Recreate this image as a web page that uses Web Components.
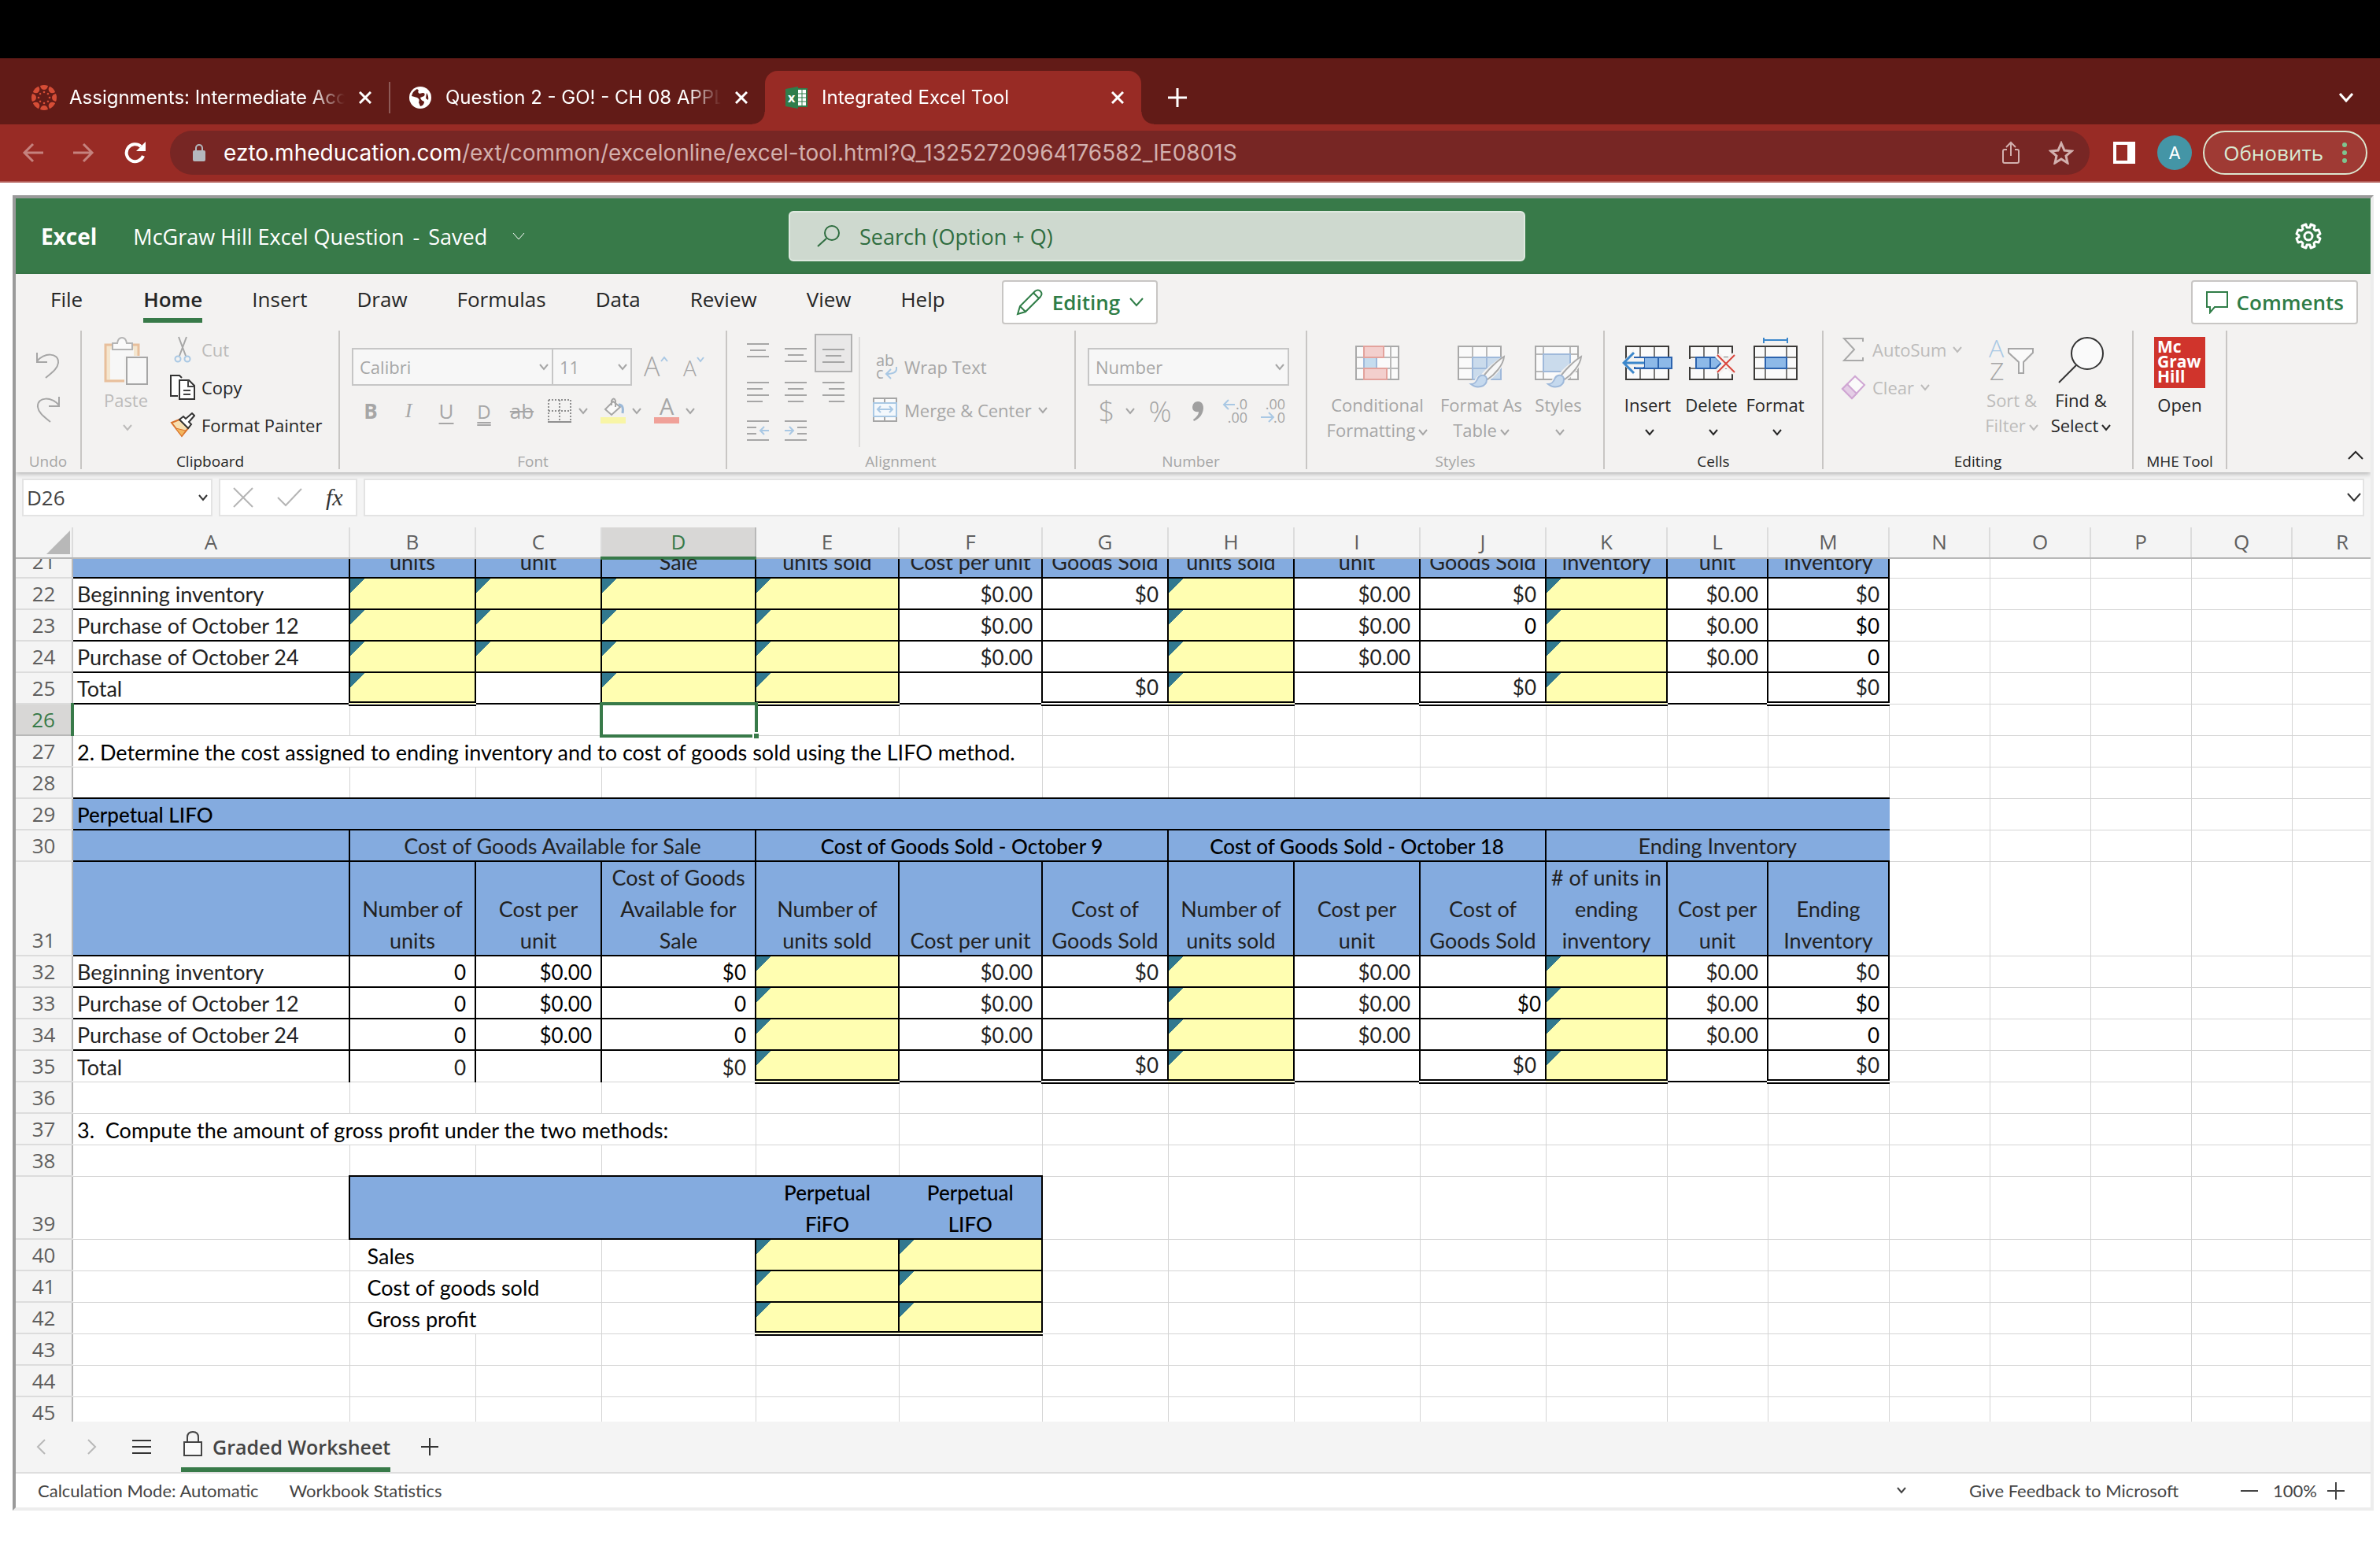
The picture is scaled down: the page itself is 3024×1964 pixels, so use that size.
<!DOCTYPE html>
<html lang="en">
<head>
<meta charset="utf-8">
<title>Integrated Excel Tool</title>
<style>
  html, body { margin: 0; height: 100%; }
  body {
    background: #fff;
    font-family: "Open Sans", "Noto Sans", sans-serif;
    font-size: 22px;
    color: #262626;
  }
</style>
</head>
<body>
<excel-page></excel-page>

<script>
const chevron = (w, h, s = 2) =>
  [w, h, `<path d="M1 1L${w / 2} ${h - 2}L${w - 1} 1" fill="none" stroke="currentColor" stroke-width="${s}"/>`];

// four text lines, each [start, end], drawn on a 28px wide box
const lines = (rows, step = 8) =>
  [28, 28, rows.map(([a, b], i) => `<path d="M${a} ${2 + i * step}H${b}" stroke="currentColor" stroke-width="2"/>`).join('')];

// small worksheet with inner lines at the given x and y positions
const sheet = (outer, inner, xs = [23, 41], ys = [26, 40]) => `
  <rect x="5" y="12" width="54" height="42" fill="#fafafa"/>
  <path d="${xs.map(x => `M${x} 12V54`).join('')}${ys.map(y => `M5 ${y}H59`).join('')}" stroke="${inner}" stroke-width="2"/>
  <rect x="5" y="12" width="54" height="42" fill="none" stroke="${outer}" stroke-width="2"/>`;

const brush = `
  <path d="M66 22C52 30 38 42 34 48C27 48 28 56 18 62L30 67L44 62L46 54C56 46 64 36 66 22Z" fill="#f3f2f1"/>
  <path d="M63 25C53 31 41 44 37 50L42 54C51 48 62 36 63 25Z" fill="#f7f7f7" stroke="#a9a9a9" stroke-width="2"/>
  <path d="M41 54C41 48 33 47 30 52C28 57 26 60 21 60C28 66 41 64 41 54Z" fill="#c5d9ee" stroke="#9fb9da" stroke-width="2"/>`;

// [width, height, svg content]
const ICONS = {
  caret: chevron(12, 9),
  chevron: chevron(18, 12, 2),
  chevronThin: chevron(16, 11, 1),
  chevronBold: chevron(18, 12, 3),
  chevronUp: [20, 12, '<path d="M1 11L10 2L19 11" fill="none" stroke="currentColor" stroke-width="2"/>'],
  close: [16, 16, '<path d="M1 1L15 15M15 1L1 15" stroke="currentColor" stroke-width="3"/>'],
  plus: [24, 24, '<path d="M12 0V24M0 12H24" stroke="currentColor" stroke-width="3"/>'],
  thinPlus: [24, 24, '<path d="M12 1V23M1 12H23" stroke="currentColor" stroke-width="2"/>'],
  minus: [24, 24, '<path d="M1 12H23" stroke="currentColor" stroke-width="2"/>'],
  back: [28, 26, '<path d="M27 13H3M14 2L3 13L14 24" fill="none" stroke="currentColor" stroke-width="3"/>'],
  forward: [28, 26, '<path d="M1 13H25M14 2L25 13L14 24" fill="none" stroke="currentColor" stroke-width="3"/>'],
  reload: [30, 28, '<path d="M23 6A11 11 0 1 0 26 18" fill="none" stroke="currentColor" stroke-width="4"/><path d="M29 0V12H17Z" fill="currentColor"/>'],
  lockSolid: [18, 24, '<rect x="1" y="9" width="16" height="14" rx="2" fill="currentColor"/><path d="M5 9V6a4 4 0 0 1 8 0V9" fill="none" stroke="currentColor" stroke-width="2"/>'],
  share: [24, 30, '<path d="M7 11H4Q2 11 2 13V26Q2 28 4 28H20Q22 28 22 26V13Q22 11 20 11H17M12 19V3M6 8L12 2L18 8" fill="none" stroke="currentColor" stroke-width="2"/>'],
  star: [32, 30, '<path d="M16 3L20 12L29 13L22 19L24 28L16 23L8 28L10 19L3 13L12 12Z" fill="none" stroke="currentColor" stroke-width="3"/>'],
  panel: [28, 28, '<path d="M0 0H28V28H0ZM4 4V24H18V4Z" fill="currentColor" fill-rule="evenodd"/>'],
  dots: [6, 28, '<circle cx="3" cy="4" r="3" fill="currentColor"/><circle cx="3" cy="14" r="3" fill="currentColor"/><circle cx="3" cy="24" r="3" fill="currentColor"/>'],
  canvas: [32, 32, `<g fill="#d64d36">${[0, 45, 90, 135, 180, 225, 270, 315].map(a =>
    `<g transform="rotate(${a} 16 16)"><path d="M11 1Q16 -1 21 1Q20 6 16 6Q12 6 11 1Z"/><circle cx="16" cy="9" r="1.300"/></g>`).join('')}</g>`],
  globe: [28, 28, '<circle cx="14" cy="14" r="14" fill="#fff"/><path d="M10 3Q4 6 3 12L10 14Q14 16 12 20L14 25Q19 24 19 19Q15 18 14 14L19 12Q21 8 17 8L13 9Q10 7 12 5ZM22 8Q25 12 24 17L21 15Z" fill="#621b17"/>'],
  excel: [28, 28, '<path d="M15 3H27V25H15Z" fill="#fff" stroke="#2f7d4b" stroke-width="2"/><path d="M16 9H26M16 14H26M16 19H26M21 4V24" stroke="#2f7d4b" stroke-width="1"/><path d="M0 3L16 0V28L0 25Z" fill="#2f7d4b"/><text x="3" y="20" font-size="16" font-weight="700" fill="#fff" font-family="Open Sans">x</text>'],
  search: [30, 30, '<circle cx="19" cy="11" r="9" fill="none" stroke="currentColor" stroke-width="2"/><path d="M12 18L1 28" stroke="currentColor" stroke-width="2"/>'],
  gear: [34, 34, `<g fill="none" stroke="currentColor" stroke-width="3"><path d="M14 2L15 6L19 6L20 2L25 4L24 8L26 10L30 9L32 14L29 16L29 18L32 20L30 25L26 24L24 26L25 30L20 32L19 28L15 28L14 32L9 30L10 26L8 24L4 25L2 20L5 18L5 16L2 14L4 9L8 10L10 8L9 4Z" stroke-linejoin="round"/><circle cx="17" cy="17" r="5"/></g>`],
  pencil: [34, 34, '<path d="M2 32L5 22L24 3Q28 0 31 3Q34 6 31 10L12 29ZM5 22L12 29M22 5L29 12" fill="none" stroke="currentColor" stroke-width="2"/>'],
  comment: [30, 30, '<path d="M2 2H28V21H12L6 28V21H2Z" fill="none" stroke="currentColor" stroke-width="2"/>'],
  undo: [32, 34, '<path d="M2 1V13H15M2 12C10 1 30 0 29 14C28 22 20 27 13 33" fill="none" stroke="currentColor" stroke-width="2"/>'],
  redo: [32, 34, '<path d="M30 1V13H17M30 12C22 1 2 0 3 14C4 22 12 27 19 33" fill="none" stroke="currentColor" stroke-width="2"/>'],
  paste: [56, 62, '<path d="M2 10H44V56H2Z" fill="#f4e6cf" stroke="#e8bf9c" stroke-width="3"/><path d="M8 16H38V54H8Z" fill="#f7f7f7"/><path d="M11 16V8H17Q18 1 23 1Q28 1 29 8H36V16Z" fill="#fafafa" stroke="#b4b4b4" stroke-width="2"/><path d="M26 24H58V64H26Z" fill="#f3f2f1"/><path d="M29 26H55V60H29Z" fill="#f7f7f7" stroke="#a6a6a6" stroke-width="2"/>'],
  cut: [32, 34, '<path d="M11 1L20 25M21 1L12 25" stroke="#a6a6a6" stroke-width="2"/><circle cx="10" cy="29" r="3.500" fill="none" stroke="#a9c8e4" stroke-width="2"/><circle cx="22" cy="29" r="3.500" fill="none" stroke="#a9c8e4" stroke-width="2"/>'],
  copy: [32, 34, '<path d="M10 28H1V2H12L15 5" fill="#fff" stroke="#333" stroke-width="2"/><path d="M12 8H24L31 15V32H12Z" fill="#fff" stroke="#333" stroke-width="2"/><path d="M23 8V16H31M17 21H26M17 26H26" fill="none" stroke="#444" stroke-width="2"/>'],
  painter: [32, 32, '<path d="M2 13L12 9L24 19L15 30Z" fill="#f8dfb0" stroke="#d9722b" stroke-width="2"/><path d="M7 20L20 23L15 30Z" fill="#f3b65e" stroke="#d9722b" stroke-width="1"/><path d="M12 9L17 5L20 8L28 1L31 4L24 12L27 15L23 20Z" fill="#fff" stroke="#333" stroke-width="2"/>'],
  growFont: [32, 32, '<path d="M22 9L26 4L30 9" fill="none" stroke="#a9c8e4" stroke-width="2"/><text x="0" y="28" font-size="34" fill="#a6a6a6" font-family="Open Sans" font-weight="300">A</text>'],
  shrinkFont: [32, 32, '<path d="M20 4L24 9L28 4" fill="none" stroke="#a9c8e4" stroke-width="2"/><text x="2" y="28" font-size="28" fill="#a6a6a6" font-family="Open Sans" font-weight="300">A</text>'],
  borders: [32, 32, '<path d="M2 2H30V29M2 2V29M16 2V29M2 16H30" fill="none" stroke="#8f8f8f" stroke-width="2" stroke-dasharray="2 2"/><path d="M1 30H31" stroke="#8f8f8f" stroke-width="2"/>'],
  fill: [32, 34, '<path d="M6 15L16 5L25 12L14 22Z" fill="#fafafa" stroke="#a6a6a6" stroke-width="2"/><path d="M14 10V4Q17 -1 19 4V12" fill="none" stroke="#a6a6a6" stroke-width="2"/><path d="M23 9Q30 9 28 20" fill="none" stroke="#9cb9d8" stroke-width="3"/><rect x="0" y="25" width="32" height="8" fill="#f8f5a6"/>'],
  fontColor: [32, 34, '<text x="7" y="22" font-size="29" fill="#a6a6a6" font-family="Open Sans">A</text><rect x="0" y="25" width="32" height="8" fill="#f0a199"/>'],
  alignTop: lines([[0, 28], [4, 24], [0, 28]]),
  alignMiddle: [28, 28, '<path d="M0 8H28M4 16H24M0 24H28" stroke="currentColor" stroke-width="2"/>'],
  alignBottom: [28, 28, '<path d="M0 9H28M4 17H24M0 25H28" stroke="currentColor" stroke-width="2"/>'],
  alignLeft: lines([[0, 28], [0, 20], [0, 28], [0, 20]]),
  alignCenter: lines([[0, 28], [4, 24], [0, 28], [4, 24]]),
  alignRight: lines([[0, 28], [8, 28], [0, 28], [8, 28]]),
  outdent: [28, 28, '<path d="M0 2H28M0 10H12M0 18H12M0 26H28" stroke="currentColor" stroke-width="2"/><path d="M28 14H18M22 9L17 14L22 19" fill="none" stroke="#a9c8e4" stroke-width="2"/>'],
  indent: [28, 28, '<path d="M0 2H28M16 10H28M16 18H28M0 26H28" stroke="currentColor" stroke-width="2"/><path d="M0 14H10M6 9L11 14L6 19" fill="none" stroke="#a9c8e4" stroke-width="2"/>'],
  wrap: [32, 34, '<text x="4" y="16" font-size="20" fill="#a6a6a6" font-family="Open Sans">ab</text><text x="4" y="32" font-size="20" fill="#a6a6a6" font-family="Open Sans">c</text><path d="M30 17V20Q30 26 17 26M23 20L17 26L23 32" fill="none" stroke="#a9c8e4" stroke-width="2"/>'],
  merge: [32, 32, '<rect x="1" y="1" width="29" height="29" fill="#fafafa" stroke="#a6a6a6" stroke-width="2"/><path d="M15 1V30" stroke="#a6a6a6" stroke-width="2"/><rect x="1" y="7" width="29" height="17" fill="#f3f8fc" stroke="#a9c8e4" stroke-width="2"/><path d="M6 15H25M10 11L6 15L10 19M21 11L25 15L21 19" fill="none" stroke="#a9c8e4" stroke-width="2"/>'],
  comma: [18, 28, '<path d="M9 2Q16 2 16 11Q15 22 4 27L3 25Q10 20 10 15Q2 16 2 9Q3 2 9 2Z" fill="#a0a0a0"/>'],
  moreDecimals: [34, 34, '<path d="M16 9H2M8 3L2 9L8 15" fill="none" stroke="#a9c8e4" stroke-width="2"/><text x="32" y="15" font-size="18" text-anchor="end" fill="#a6a6a6" font-family="Open Sans">.0</text><text x="32" y="32" font-size="18" text-anchor="end" fill="#a6a6a6" font-family="Open Sans">.00</text>'],
  lessDecimals: [34, 34, '<path d="M1 25H16M11 19L17 25L11 31" fill="none" stroke="#a9c8e4" stroke-width="2"/><text x="32" y="15" font-size="18" text-anchor="end" fill="#a6a6a6" font-family="Open Sans">.00</text><text x="32" y="32" font-size="18" text-anchor="end" fill="#a6a6a6" font-family="Open Sans">.0</text>'],
  conditional: [64, 68, sheet('#a9a9a9', '#b9b9b9', [15, 49]) + '<rect x="16" y="27" width="32" height="12" fill="#fafafa"/><rect x="15" y="12" width="25" height="14" fill="#f3cfcd" stroke="#e3a29c" stroke-width="2"/><rect x="15" y="27" width="17" height="12" fill="#c5dcee"/><path d="M15 27V39M31 27V39" stroke="#9fb9da" stroke-width="2"/><rect x="15" y="40" width="29" height="14" fill="#f3cfcd" stroke="#e3a29c" stroke-width="2"/>'],
  formatTable: [68, 68, sheet('#a9a9a9', '#b9b9b9') + '<path d="M23 26H59V54H23Z" fill="#cadbec"/><path d="M23 26V54M23 26H59M23 40H59M41 26V54M59 26V54H23" fill="none" stroke="#9fb9da" stroke-width="2"/>' + brush],
  cellStyles: [68, 68, sheet('#a9a9a9', '#b9b9b9', [15, 49], [22, 44]) + '<rect x="15" y="22" width="34" height="22" fill="#cadbec" stroke="#9fb9da" stroke-width="2"/>' + brush],
  insertCells: [66, 68, sheet('#3b3a38', '#7a7977') + '<rect x="16" y="26" width="47" height="14" fill="#8db9e8" stroke="#2c63ae" stroke-width="2"/><path d="M28 26V40M46 26V40" stroke="#2c63ae" stroke-width="2"/><path d="M0 33L15 15V27H28V38H15V50Z" fill="#f3f2f1"/><path d="M28 33H3M15 20L2 33L15 46" fill="none" stroke="#3c87cb" stroke-width="3"/>'],
  deleteCells: [66, 68, sheet('#3b3a38', '#7a7977') + '<path d="M3 28H13V38H3Z" fill="#f3f2f1"/><path d="M42 26H62V40H42Z" fill="#f3f2f1"/><path d="M13 26H38L45 33L38 40H13Z" fill="#8db9e8" stroke="#2c63ae" stroke-width="2"/><path d="M31 26V40" stroke="#2c63ae" stroke-width="2"/><path d="M40 23L62 45M62 23L40 45" stroke="#f3f2f1" stroke-width="8"/><path d="M40 23L62 45M62 23L40 45" stroke="#d9463d" stroke-width="2"/>'],
  formatCells: [64, 68, sheet('#3b3a38', '#7a7977', [19, 46]) + '<rect x="19" y="26" width="27" height="14" fill="#8db9e8" stroke="#2c63ae" stroke-width="2"/><path d="M17 4H47M17 1V8M47 1V8" stroke="#3c87cb" stroke-width="2"/>'],
  sum: [32, 32, '<path d="M28 6V2H4L17 16L4 30H28V26" fill="none" stroke="#a9a9a9" stroke-width="2"/>'],
  eraser: [32, 32, '<path d="M2 18L18 2L30 13L14 30Z" fill="#fafafa" stroke="#cfa6d3" stroke-width="2"/><path d="M2 18L8 12L20 24L14 30Z" fill="#e4cde6" stroke="#cfa6d3" stroke-width="2"/>'],
  sort: [60, 58, '<text x="1" y="26" font-size="32" fill="#a9c8e4" font-family="Open Sans" font-weight="300">A</text><text x="2" y="55" font-size="32" fill="#a6a6a6" font-family="Open Sans" font-weight="300">Z</text><path d="M26 15H57V20L45 32V46H39V32L26 20Z" fill="#fafafa" stroke="#a6a6a6" stroke-width="2"/>'],
  find: [60, 60, '<circle cx="38" cy="21" r="20" fill="#fafafa" stroke="#333" stroke-width="2"/><path d="M24 36L2 58" stroke="#333" stroke-width="2"/>'],
  cancel: [26, 26, '<path d="M1 1L25 25M25 1L1 25" stroke="currentColor" stroke-width="2"/>'],
  check: [32, 24, '<path d="M1 12L11 22L31 1" fill="none" stroke="currentColor" stroke-width="2"/>'],
  prev: [12, 20, '<path d="M11 1L2 10L11 19" fill="none" stroke="currentColor" stroke-width="2"/>'],
  next: [12, 20, '<path d="M1 1L10 10L1 19" fill="none" stroke="currentColor" stroke-width="2"/>'],
  menu: [24, 20, '<path d="M0 2H24M0 10H24M0 18H24" stroke="currentColor" stroke-width="2"/>'],
  lock: [26, 34, '<path d="M2 15H24V32H2Z" fill="#fafafa" stroke="currentColor" stroke-width="2"/><path d="M6 15V9Q6 2 13 2Q20 2 20 9V15" fill="none" stroke="currentColor" stroke-width="2"/>']
};

class BaseElement extends HTMLElement {

    constructor() {
        super();
        this.shadowDOM = this.attachShadow({ mode: 'open' });
    }

    connectedCallback() {
        this.render();
    }
}

class AppIcon extends BaseElement {

    render() {
        const [w, h, content] = ICONS[this.getAttribute('name')];
        this.shadowDOM.innerHTML = `
        <style>
          :host { display: inline-flex; flex: none; }
          svg { display: block; }
        </style>
        <svg width="${w}" height="${h}" viewBox="0 0 ${w} ${h}" aria-hidden="true">${content}</svg>`;
    }
}
customElements.define('app-icon', AppIcon);

class BrowserTab extends BaseElement {

    render() {
        this.shadowDOM.innerHTML = `
        <style>
          :host {
            display: flex;
            align-items: center;
            box-sizing: border-box;
            flex: 0 1 478px;
            min-width: 0;
            margin-top: 16px;
            padding: 0 14px 0 24px;
            position: relative;
            color: #fff;
            font: 400 24px "Inter", sans-serif;
          }
          :host([divided])::after {
            content: "";
            position: absolute;
            right: -2px;
            top: 14px;
            height: 40px;
            width: 2px;
            background: #8e5a57;
          }
          :host([active]) {
            background: #982b25;
            border-radius: 16px 16px 0 0;
          }
          :host([active])::before, :host([active])::after {
            content: "";
            position: absolute;
            bottom: 0;
            width: 16px;
            height: 16px;
          }
          :host([active])::before {
            left: -16px;
            background: radial-gradient(circle at 0 0, transparent 15px, #982b25 16px);
          }
          :host([active])::after {
            right: -16px;
            background: radial-gradient(circle at 100% 0, transparent 15px, #982b25 16px);
          }
          .favicon { display: flex; width: 32px; justify-content: center; }
          .title {
            flex: 1;
            min-width: 0;
            margin: 0 10px 0 16px;
            overflow: hidden;
            white-space: nowrap;
            line-height: 40px;
            -webkit-mask-image: linear-gradient(90deg, #000 88%, transparent);
            mask-image: linear-gradient(90deg, #000 88%, transparent);
          }
          button {
            display: flex;
            justify-content: center;
            width: 32px;
            padding: 8px 0;
            border: 0;
            background: none;
            color: inherit;
          }
        </style>
        <span class="favicon"><app-icon name="${this.getAttribute('icon')}"></app-icon></span>
        <span class="title"><slot></slot></span>
        <button aria-label="Close tab"><app-icon name="close"></app-icon></button>`;
    }
}
customElements.define('browser-tab', BrowserTab);

class BrowserChrome extends BaseElement {

    render() {
        this.shadowDOM.innerHTML = `
        <style>
          :host { display: block; color: #fff; font-family: "Inter", sans-serif; }
          button { border: 0; padding: 0; background: none; color: inherit; display: flex; align-items: center; justify-content: center; font: inherit; }
          .notch { height: 74px; background: #000; }
          .tabs { display: flex; height: 84px; padding: 0 34px 0 16px; background: #621b17; }
          .tabs .new { margin: 16px 0 0 22px; width: 48px; }
          .tabs .list { margin: 16px 0 0 auto; }
          .bar {
            display: flex;
            align-items: center;
            height: 72px;
            padding: 0 16px 0 28px;
            background: #982b25;
            border-bottom: 2px solid #b35c57;
          }
          .nav { width: 64px; justify-content: flex-start; color: #c5827e; }
          .nav.on { color: #fff; }
          .address {
            flex: 1;
            display: flex;
            align-items: center;
            height: 56px;
            padding: 0 20px 0 28px;
            margin: 0 30px 0 -4px;
            border-radius: 28px;
            background: #772624;
            color: #d2b0ae;
            font-size: 28px;
          }
          .address app-icon[name="lockSolid"] { color: #b4b8be; }
          .url { flex: 1; margin-left: 22px; white-space: nowrap; }
          .url b { font-weight: 400; color: #fff; }
          .address button { margin-left: 36px; }
          .avatar {
            width: 44px; height: 44px;
            margin: 0 14px 0 28px;
            border-radius: 50%;
            background: #4495a6;
            font-size: 22px;
          }
          .update {
            gap: 24px;
            height: 56px;
            padding: 0 24px;
            box-sizing: border-box;
            border: 2px solid #dce6cf;
            border-radius: 28px;
            background: #9f3a34;
            color: #d9ead3;
            font: 500 26px "Open Sans", sans-serif;
          }
          .update app-icon { color: #7fc48f; }
        </style>
        <div class="notch"></div>
        <div class="tabs">
          <browser-tab icon="canvas" divided>Assignments: Intermediate Accounting</browser-tab>
          <browser-tab icon="globe">Question 2 - GO! - CH 08 APPLIED</browser-tab>
          <browser-tab icon="excel" active>Integrated Excel Tool</browser-tab>
          <button class="new" aria-label="New tab"><app-icon name="plus"></app-icon></button>
          <button class="list" aria-label="Search tabs"><app-icon name="chevronBold"></app-icon></button>
        </div>
        <div class="bar">
          <button class="nav" aria-label="Back"><app-icon name="back"></app-icon></button>
          <button class="nav" aria-label="Forward"><app-icon name="forward"></app-icon></button>
          <button class="nav on" aria-label="Reload"><app-icon name="reload"></app-icon></button>
          <div class="address">
            <app-icon name="lockSolid"></app-icon>
            <span class="url" role="textbox" contenteditable="true" spellcheck="false" aria-label="Address"><b>ezto.mheducation.com</b>/ext/common/excelonline/excel-tool.html?Q_13252720964176582_IE0801S</span>
            <button aria-label="Share"><app-icon name="share"></app-icon></button>
            <button aria-label="Bookmark"><app-icon name="star"></app-icon></button>
          </div>
          <button aria-label="Side panel"><app-icon name="panel"></app-icon></button>
          <button class="avatar" aria-label="Profile">A</button>
          <button class="update">Обновить<app-icon name="dots"></app-icon></button>
        </div>`;
    }
}
customElements.define('browser-chrome', BrowserChrome);

class ExcelHeader extends BaseElement {

    render() {
        this.shadowDOM.innerHTML = `
        <style>
          :host {
            display: grid;
            grid-template-columns: 982px minmax(400px, 936px) 1fr;
            align-items: center;
            height: 96px;
            background: #387a49;
            color: #fff;
            font-size: 27px;
          }
          button { border: 0; padding: 0; background: none; color: inherit; display: flex; }
          .name { display: flex; align-items: center; padding-left: 32px; white-space: pre; }
          .name b { font-weight: 700; font-size: 28px; margin-right: 46px; }
          .dash { margin: 0 4px; }
          .name button { margin-left: 32px; }
          .search {
            display: flex;
            align-items: center;
            gap: 24px;
            box-sizing: border-box;
            height: 64px;
            padding: 0 34px;
            border: 2px solid #dfe9e0;
            border-radius: 6px;
            background: #ced9cf;
            color: #2f6d40;
          }
          input { flex: 1; min-width: 0; border: 0; padding: 0; background: none; font: inherit; color: inherit; outline: 0; }
          input::placeholder { color: #2f6d40; opacity: 1; }
          .settings { justify-self: end; margin-right: 62px; }
        </style>
        <div class="name"><b>Excel</b><span>McGraw Hill Excel Question <span class="dash">-</span> Saved</span><button aria-label="File details"><app-icon name="chevronThin"></app-icon></button></div>
        <label class="search"><app-icon name="search"></app-icon><input type="search" placeholder="Search (Option + Q)" aria-label="Search"></label>
        <button class="settings" aria-label="Settings"><app-icon name="gear"></app-icon></button>`;
    }
}
customElements.define('excel-header', ExcelHeader);

class RibbonTabs extends BaseElement {

    render() {
        const tabs = ['File', 'Home', 'Insert', 'Draw', 'Formulas', 'Data', 'Review', 'View', 'Help'];
        this.shadowDOM.innerHTML = `
        <style>
          :host { display: flex; align-items: flex-start; height: 72px; padding: 0 16px 0 0; box-sizing: border-box; font-size: 26px; }
          button { font: inherit; color: inherit; background: none; border: 0; padding: 0; }
          nav { display: flex; gap: 63px; padding-left: 44px; }
          nav button { padding: 8px 0 0; height: 62px; line-height: 40px; box-sizing: border-box; border-bottom: 6px solid transparent; }
          nav button[aria-current] { margin-left: 14px; font-weight: 600; border-color: #387a49; }
          .box {
            display: flex;
            align-items: center;
            gap: 10px;
            box-sizing: border-box;
            height: 56px;
            margin-top: 8px;
            padding: 0 16px;
            border: 2px solid #c8c6c4;
            border-radius: 4px;
            background: #fff;
            color: #2f7d47;
            font-weight: 600;
          }
          .editing { margin-left: 72px; gap: 12px; }
          .comments { margin-left: auto; }
        </style>
        <nav>${tabs.map(t => `<button${t === 'Home' ? ' aria-current="page"' : ''}>${t}</button>`).join('')}</nav>
        <button class="box editing"><app-icon name="pencil"></app-icon>Editing <app-icon name="chevron"></app-icon></button>
        <button class="box comments"><app-icon name="comment"></app-icon>Comments</button>`;
    }
}
customElements.define('ribbon-tabs', RibbonTabs);

class RibbonGroup extends BaseElement {

    render() {
        this.shadowDOM.innerHTML = `
        <style>
          :host {
            display: flex;
            flex: none;
            flex-direction: column;
            box-sizing: border-box;
            height: 176px;
            border-right: 2px solid #c8c6c4;
            color: #262626;
          }
          :host([off]) { color: #a6a6a6; }
          .body { flex: 1; display: flex; align-items: flex-start; }
          h2 { margin: 0; font-size: 19px; font-weight: 400; line-height: 20px; text-align: center; white-space: nowrap; }
        </style>
        <div class="body"><slot></slot></div>
        <h2>${this.getAttribute('label')}</h2>`;
    }
}
customElements.define('ribbon-group', RibbonGroup);

// icon over one or two lines of label
class LargeButton extends BaseElement {

    render() {
        const caret = this.hasAttribute('caret') ? '<app-icon name="caret"></app-icon>' : '';
        this.shadowDOM.innerHTML = `
        <style>
          :host { display: block; flex: none; }
          :host([off]) { color: #a6a6a6; }
          :host([faint]) { color: #bcbbba; }
          button {
            display: block;
            width: 100%;
            padding: 8px 0 0;
            border: 0;
            background: none;
            color: inherit;
            font: inherit;
            line-height: 32px;
            white-space: nowrap;
            text-align: center;
          }
          .icon { display: flex; justify-content: center; height: 64px; }
          :host([tall]) .icon { height: 70px; }
          app-icon[name="caret"] { margin-left: 4px; vertical-align: middle; }
        </style>
        <button><span class="icon"><slot name="icon"></slot></span><slot></slot><br><slot name="second"></slot>${caret}</button>`;
    }
}
customElements.define('large-button', LargeButton);

// icon and label side by side
class SmallButton extends BaseElement {

    render() {
        const caret = this.hasAttribute('caret') ? '<app-icon name="caret"></app-icon>' : '';
        this.shadowDOM.innerHTML = `
        <style>
          :host { display: block; }
          :host([faint]) { color: #bcbbba; }
          button {
            display: flex;
            align-items: center;
            gap: 8px;
            height: 48px;
            padding: 0;
            border: 0;
            background: none;
            color: inherit;
            font: inherit;
            white-space: nowrap;
          }
        </style>
        <button><app-icon name="${this.getAttribute('icon')}"></app-icon><slot></slot>${caret}</button>`;
    }
}
customElements.define('small-button', SmallButton);

class ComboBox extends BaseElement {

    render() {
        this.shadowDOM.innerHTML = `
        <style>
          :host { display: block; position: relative; }
          select {
            appearance: none;
            box-sizing: border-box;
            width: 100%;
            height: 48px;
            padding: 0 8px;
            border: 2px solid #c6c6c6;
            border-radius: 0;
            background: #f7f7f7;
            color: #a6a6a6;
            font: inherit;
          }
          app-icon { position: absolute; right: 6px; top: 20px; pointer-events: none; }
        </style>
        <select aria-label="${this.getAttribute('label')}"><option>${this.getAttribute('value')}</option></select>
        <app-icon name="caret"></app-icon>`;
    }
}
customElements.define('combo-box', ComboBox);

class ExcelRibbon extends BaseElement {

    render() {
        const tool = (name, label) => `<button aria-label="${label}"><app-icon name="${name}"></app-icon></button>`;
        this.shadowDOM.innerHTML = `
        <style>
          :host { display: block; background: #f3f2f1; box-shadow: 0 2px 6px rgba(0, 0, 0, .28); position: relative; z-index: 1; }
          .groups { display: flex; padding-bottom: 4px; white-space: nowrap; }
          button { display: flex; align-items: center; justify-content: center; width: 48px; height: 32px; padding: 0; border: 0; background: none; color: inherit; font-size: 26px; font-family: inherit; }
          .drop { width: 20px; justify-content: flex-start; }
          .row { display: flex; height: 48px; align-items: center; }
          .row + .row { height: 32px; margin-top: 16px; }
          .stack { padding-top: 22px; }
          .undo { width: 84px; }
          .history { display: flex; flex-direction: column; align-items: center; gap: 24px; width: 100%; padding-top: 28px; }
          .clipboard { width: 328px; }
          .clipboard large-button { width: 88px; margin: 0 12px; }
          .font { width: 492px; }
          .font .stack, .number .stack { padding-left: 15px; }
          .fontname { width: 256px; margin-right: -2px; }
          .fontsize { width: 102px; margin-right: 7px; }
          .alignment { width: 443px; }
          .aligns { display: grid; grid-template-columns: repeat(3, 48px); padding: 4px 8px 0 15px; }
          .aligns button { height: 49px; }
          .aligns .on { box-sizing: border-box; border: 2px solid #b1b1b1; background: #e9e8e8; }
          .texts { margin-top: 8px; height: 140px; border-left: 2px solid #dddcdb; padding-left: 16px; }
          .texts small-button { margin-top: 14px; }
          .texts small-button + small-button { margin-top: 7px; }
          .number { width: 294px; }
          .format { width: 256px; }
          .styles { width: 378px; }
          .cells { width: 278px; }
          .cells large-button { width: 81px; }
          .editing { width: 394px; }
          .editing div { width: 173px; padding-left: 22px; }
          .editing large-button { width: 88px; }
          .mhe { width: 119px; }
          .mhe large-button { width: 100%; }
          .logo { box-sizing: border-box; width: 65px; height: 65px; padding: 3px 4px; background: #d0342c; color: #fff; font-weight: 700; font-size: 21px; line-height: 19px; text-align: left; }
          .collapse { width: 20px; height: 20px; margin: auto 9px 8px auto; }
          .ul { text-decoration: underline; text-underline-offset: 5px; text-decoration-thickness: 2px; }
          .dbl { text-decoration: underline double; text-underline-offset: 4px; text-decoration-thickness: 2px; font-size: 24px; }
          .st { text-decoration: line-through; text-decoration-thickness: 2px; }
          .sym { font-size: 36px; font-weight: 300; }
          .edge { width: 14px; }
        </style>
        <ribbon-tabs></ribbon-tabs>
        <div class="groups">
          <ribbon-group class="undo" label="Undo" off>
            <div class="history">${tool('undo', 'Undo')}${tool('redo', 'Redo')}</div>
          </ribbon-group>
          <ribbon-group class="clipboard" label="Clipboard">
            <large-button faint caret><app-icon slot="icon" name="paste"></app-icon>Paste</large-button>
            <div>
              <small-button icon="cut" faint>Cut</small-button>
              <small-button icon="copy">Copy</small-button>
              <small-button icon="painter">Format Painter</small-button>
            </div>
          </ribbon-group>
          <ribbon-group class="font" label="Font" off>
            <div class="stack">
              <div class="row">
                <combo-box class="fontname" label="Font" value="Calibri"></combo-box>
                <combo-box class="fontsize" label="Font size" value="11"></combo-box>
                ${tool('growFont', 'Increase font size')}${tool('shrinkFont', 'Decrease font size')}
              </div>
              <div class="row">
                <button><b>B</b></button>
                <button><i style="font-family: 'Liberation Serif', serif">I</i></button>
                <button><span class="ul">U</span></button>
                <button><span class="dbl">D</span></button>
                <button><span class="st">ab</span></button>
                ${tool('borders', 'Borders')}<button class="drop" aria-label="More borders"><app-icon name="caret"></app-icon></button>
                ${tool('fill', 'Fill color')}<button class="drop" aria-label="More fills"><app-icon name="caret"></app-icon></button>
                ${tool('fontColor', 'Font color')}<button class="drop" aria-label="More colors"><app-icon name="caret"></app-icon></button>
              </div>
            </div>
          </ribbon-group>
          <ribbon-group class="alignment" label="Alignment" off>
            <div class="aligns">
              ${tool('alignTop', 'Top align')}${tool('alignMiddle', 'Middle align')}
              <button class="on" aria-label="Bottom align"><app-icon name="alignBottom"></app-icon></button>
              ${tool('alignLeft', 'Align left')}${tool('alignCenter', 'Center')}${tool('alignRight', 'Align right')}
              ${tool('outdent', 'Decrease indent')}${tool('indent', 'Increase indent')}
            </div>
            <div class="texts">
              <small-button icon="wrap">Wrap Text</small-button>
              <small-button icon="merge" caret>Merge &amp; Center</small-button>
            </div>
          </ribbon-group>
          <ribbon-group class="number" label="Number" off>
            <div class="stack">
              <div class="row"><combo-box class="format" label="Number format" value="Number"></combo-box></div>
              <div class="row">
                <button class="sym">$</button><button class="drop" aria-label="More currencies"><app-icon name="caret"></app-icon></button>
                <button class="sym">%</button>
                ${tool('comma', 'Comma style')}${tool('moreDecimals', 'Increase decimal')}${tool('lessDecimals', 'Decrease decimal')}
              </div>
            </div>
          </ribbon-group>
          <ribbon-group class="styles" label="Styles" off>
            <large-button style="width: 140px; margin-left: 19px" tall caret><app-icon slot="icon" name="conditional"></app-icon>Conditional<span slot="second">Formatting</span></large-button>
            <large-button style="width: 124px" tall caret><app-icon slot="icon" name="formatTable"></app-icon>Format As<span slot="second">Table</span></large-button>
            <large-button style="width: 72px" tall caret><app-icon slot="icon" name="cellStyles"></app-icon>Styles</large-button>
          </ribbon-group>
          <ribbon-group class="cells" label="Cells">
            <span class="edge"></span>
            <large-button tall caret><app-icon slot="icon" name="insertCells"></app-icon>Insert</large-button>
            <large-button tall caret><app-icon slot="icon" name="deleteCells"></app-icon>Delete</large-button>
            <large-button tall caret><app-icon slot="icon" name="formatCells"></app-icon>Format</large-button>
          </ribbon-group>
          <ribbon-group class="editing" label="Editing">
            <div>
              <small-button icon="sum" faint caret>AutoSum</small-button>
              <small-button icon="eraser" faint caret>Clear</small-button>
            </div>
            <large-button faint caret><app-icon slot="icon" name="sort"></app-icon>Sort &amp;<span slot="second">Filter</span></large-button>
            <large-button caret><app-icon slot="icon" name="find"></app-icon>Find &amp;<span slot="second">Select</span></large-button>
          </ribbon-group>
          <ribbon-group class="mhe" label="MHE Tool">
            <large-button tall><span slot="icon" class="logo">Mc<br>Graw<br>Hill</span>Open</large-button>
          </ribbon-group>
          <button class="collapse" aria-label="Collapse ribbon"><app-icon name="chevronUp"></app-icon></button>
        </div>`;
    }
}
customElements.define('excel-ribbon', ExcelRibbon);

class FormulaBar extends BaseElement {

    render() {
        this.shadowDOM.innerHTML = `
        <style>
          :host { display: flex; gap: 8px; padding: 8px 8px 14px; background: #f4f4f4; color: #444; font-size: 26px; }
          .box { display: flex; align-items: center; box-sizing: border-box; height: 48px; border: 2px solid #e3e3e3; background: #fff; }
          input { flex: 1; min-width: 0; height: 100%; box-sizing: border-box; border: 0; padding: 0 4px; background: none; font: inherit; color: inherit; outline: 0; }
          button { display: flex; border: 0; padding: 0; background: none; color: #b5b5b5; font: inherit; }
          button.dark { color: #333; }
          .name { width: 242px; padding-right: 4px; }
          .tools { width: 176px; gap: 30px; padding-left: 16px; }
          .formula { flex: 1; padding-right: 2px; }
          i { font: italic 30px "Liberation Serif", serif; }
        </style>
        <div class="box name"><input aria-label="Name box" value="D26"><button class="dark" aria-label="Named ranges"><app-icon name="caret"></app-icon></button></div>
        <div class="box tools">
          <button aria-label="Cancel"><app-icon name="cancel"></app-icon></button>
          <button aria-label="Enter"><app-icon name="check"></app-icon></button>
          <button class="dark"><i>fx</i></button>
        </div>
        <div class="box formula"><input aria-label="Formula"><button class="dark" aria-label="Expand formula bar"><app-icon name="chevron"></app-icon></button></div>`;
    }
}
customElements.define('formula-bar', FormulaBar);

const COLUMNS = {
  A: 352, B: 160, C: 160, D: 196, E: 182, F: 182, G: 160, H: 160, I: 160,
  J: 160, K: 154, L: 128, M: 154, N: 128, O: 128, P: 128, Q: 128, R: 128
};

const HEADS = [
  '', 'Number of\nunits', 'Cost per\nunit', 'Cost of Goods\nAvailable for\nSale', 'Number of\nunits sold', 'Cost per unit',
  'Cost of\nGoods Sold', 'Number of\nunits sold', 'Cost per\nunit', 'Cost of\nGoods Sold',
  '# of units in\nending\ninventory', 'Cost per\nunit', 'Ending\nInventory'
];

const Y = 'yellow k';
const YD = 'yellow k kd';
// a cell is [text, classes, colspan]
const blueHead = HEADS.map((t, i) => [t, i ? 'blue head k' : 'blue kt kb']);
const label = (t) => [t, 'kt kb'];
const num = (t, extra = '') => [t, 'k num ' + extra];

const ROWS = [
  { n: 21, cells: HEADS.map((t, i) => [t.split('\n').pop(), i ? 'blue head kl kb kr' : 'blue kb']), clip: true },
  { n: 22, cells: [label('Beginning inventory'), ['', Y], ['', Y], ['', Y], ['', Y], num('$0.00'), num('$0'), ['', Y], num('$0.00'), num('$0'), ['', Y], num('$0.00'), num('$0')] },
  { n: 23, cells: [label('Purchase of October 12'), ['', Y], ['', Y], ['', Y], ['', Y], num('$0.00'), num(''), ['', Y], num('$0.00'), num('0', 'dark'), ['', Y], num('$0.00'), num('$0', 'dark')] },
  { n: 24, cells: [label('Purchase of October 24'), ['', Y], ['', Y], ['', Y], ['', Y], num('$0.00'), num(''), ['', Y], num('$0.00'), num(''), ['', Y], num('$0.00'), num('0', 'dark')] },
  { n: 25, cells: [label('Total'), ['', YD], num(''), ['', Y], ['', YD], num(''), num('$0', 'kd'), ['', YD], num(''), num('$0', 'kd'), ['', YD], num(''), num('$0', 'kd')] },
  { n: 26, cells: [['', ''], ['', ''], ['', ''], ['', 'selected']] },
  { n: 27, cells: [['2. Determine the cost assigned to ending inventory and to cost of goods sold using the LIFO method.', 'dark', 6]] },
  { n: 28, cells: [] },
  { n: 29, cells: [['Perpetual LIFO', 'blue kt kb strong', 13]] },
  { n: 30, cells: [['', 'blue kt kb'], ['Cost of Goods Available for Sale', 'blue head k', 3], ['Cost of Goods Sold - October 9', 'blue head k strong', 3], ['Cost of Goods Sold - October 18', 'blue head k strong', 3], ['Ending Inventory', 'blue head kt kb kl', 3]] },
  { n: 31, cells: blueHead, height: 120 },
  { n: 32, cells: [label('Beginning inventory'), num('0', 'dark'), num('$0.00', 'dark'), num('$0', 'dark'), ['', Y], num('$0.00'), num('$0'), ['', Y], num('$0.00'), num(''), ['', Y], num('$0.00'), num('$0')] },
  { n: 33, cells: [label('Purchase of October 12'), num('0', 'dark'), num('$0.00', 'dark'), num('0', 'dark'), ['', Y], num('$0.00'), num(''), ['', Y], num('$0.00'), num('$0', 'dark tight'), ['', Y], num('$0.00'), num('$0', 'dark')] },
  { n: 34, cells: [label('Purchase of October 24'), num('0', 'dark'), num('$0.00', 'dark'), num('0', 'dark'), ['', Y], num('$0.00'), num(''), ['', Y], num('$0.00'), num(''), ['', Y], num('$0.00'), num('0', 'dark')] },
  { n: 35, cells: [['Total', 'kt'], ['0', 'num kt kl kr'], ['', 'kt kl kr'], ['$0', 'num kt kl kr'], ['', YD], num(''), num('$0', 'kd'), ['', YD], num(''), num('$0', 'kd'), ['', YD], num(''), num('$0', 'kd')] },
  { n: 36, cells: [] },
  { n: 37, cells: [['3.  Compute the amount of gross profit under the two methods:', 'dark', 4]] },
  { n: 38, cells: [] },
  { n: 39, cells: [['', ''], ['', 'blue kt kb kl', 3], ['Perpetual\nFiFO', 'blue head kt kb strong'], ['Perpetual\nLIFO', 'blue head kt kb kr strong']], height: 80 },
  { n: 40, cells: [['', ''], ['Sales', 'inset dark', 2], ['', ''], ['', Y], ['', Y]] },
  { n: 41, cells: [['', ''], ['Cost of goods sold', 'inset dark', 2], ['', ''], ['', Y], ['', Y]] },
  { n: 42, cells: [['', ''], ['Gross profit', 'inset dark', 2], ['', ''], ['', YD], ['', YD]] },
  { n: 43, cells: [] },
  { n: 44, cells: [] },
  { n: 45, cells: [] }
];

class SheetGrid extends BaseElement {

    renderRow({ n, cells, height = 40, clip }) {
        const used = cells.reduce((sum, c) => sum + (c[2] || 1), 0);
        const blanks = Array(Object.keys(COLUMNS).length - used).fill(['', '']);
        const tds = [...cells, ...blanks].map(([text, cls, span]) =>
            `<td class="${cls}"${span ? ` colspan="${span}"` : ''}><div>${text}</div></td>`).join('');
        return `<tr class="${clip ? 'clip' : ''}${n === 26 ? 'current' : ''}" style="height: ${clip ? 24 : height}px"><th scope="row"><div>${n}</div></th>${tds}</tr>`;
    }

    render() {
        const total = Object.values(COLUMNS).reduce((a, b) => a + b, 72);
        this.shadowDOM.innerHTML = `
        <style>
          :host { display: block; flex: 1; min-height: 0; overflow: hidden; background: #fff; }
          table {
            width: ${total}px;
            table-layout: fixed;
            border-collapse: collapse;
            font: 27px "Lato", "Carlito", sans-serif;
            line-height: 40px;
            color: #222;
          }
          td, th { padding: 0; vertical-align: bottom; }
          td { border: 1px solid #d4d4d4; }
          td div { margin: -2px 0; padding: 0 5px; white-space: pre; min-height: 38px; }
          th { border: 2px solid #dcdcdc; background: #f4f4f4; color: #5f5f5f; font: 26px "Open Sans", sans-serif; line-height: 42px; }
          th div { margin: -2px 0; }
          thead tr { height: 39px; }
          thead th { border-top: 0; border-bottom-color: #b8b8b8; line-height: 36px; vertical-align: top; }
          th:first-child { border-left: 0; }
          tbody th { border-right-color: #b8b8b8; }
          thead th.on { background: #d8d7d6; color: #387a49; border-bottom: 4px solid #387a49; border-left-color: #b8b8b8; border-right-color: #b8b8b8; }
          .current th { background: #d8d7d6; color: #387a49; border-right: 4px solid #387a49; border-top-color: #b8b8b8; border-bottom-color: #b8b8b8; }
          .corner { display: block; width: 30px; height: 30px; margin: 4px 2px 0 auto; padding: 0; border: 0; background: #b8b8b8; clip-path: polygon(100% 0, 100% 100%, 0 100%); }
          .blue { background: #84abdf; border-color: #84abdf; }
          .yellow { background: linear-gradient(135deg, #31788f 50%, transparent 51%) 0 0 / 18px 18px no-repeat #fffeb1; }
          .head { text-align: center; }
          .head div { padding: 0; }
          .num { text-align: right; font-size: 26px; }
          .num div { padding-right: 11px; }
          .tight div { padding-right: 5px; }
          .inset div { padding-left: 22px; }
          .dark { color: #000; }
          .strong { color: #000; font-size: 26px; font-weight: 500; }
          .k { border: 2px solid #000; }
          .kt { border-top: 2px solid #000; }
          .kb { border-bottom: 2px solid #000; }
          .kl { border-left: 2px solid #000; }
          .kr { border-right: 2px solid #000; }
          .kd { border-bottom: 6px double #000; }
          .clip div { display: flex; align-items: flex-end; justify-content: center; box-sizing: border-box; height: 24px; min-height: 0; margin: -1px 0; overflow: hidden; }
          .selected { position: relative; }
          .selected::before { content: ""; position: absolute; inset: -3px; border: 4px solid #387a49; }
          .selected::after { content: ""; position: absolute; right: -4px; bottom: -4px; width: 6px; height: 6px; border: 2px solid #fff; border-width: 2px 0 0 2px; background: #387a49; }
        </style>
        <table>
          <colgroup><col style="width: 72px">${Object.values(COLUMNS).map(w => `<col style="width: ${w}px">`).join('')}</colgroup>
          <thead><tr><th><button class="corner" aria-label="Select all"></button></th>${Object.keys(COLUMNS).map(c =>
            `<th scope="col"${c === 'D' ? ' class="on"' : ''}>${c}</th>`).join('')}</tr></thead>
          <tbody>${ROWS.map(r => this.renderRow(r)).join('')}</tbody>
        </table>`;
    }
}
customElements.define('sheet-grid', SheetGrid);

class SheetTabs extends BaseElement {

    render() {
        this.shadowDOM.innerHTML = `
        <style>
          :host { display: flex; align-items: center; height: 64px; padding-left: 26px; background: #f4f4f4; border-bottom: 2px solid #dedede; color: #333; font-size: 25px; }
          button { display: flex; align-items: center; border: 0; padding: 0; background: none; color: inherit; font: inherit; }
          .arrow { width: 65px; color: #b8b8b8; }
          .menu { width: 60px; margin-left: -8px; }
          .sheet { gap: 12px; box-sizing: border-box; height: 64px; margin: 0 38px 0 2px; border-top: 6px solid transparent; border-bottom: 6px solid #387a49; color: #444; font-weight: 600; }
          .sheet app-icon { margin: -8px 0 0 2px; }
        </style>
        <button class="arrow" aria-label="Previous sheet"><app-icon name="prev"></app-icon></button>
        <button class="arrow" aria-label="Next sheet"><app-icon name="next"></app-icon></button>
        <button class="menu" aria-label="All sheets"><app-icon name="menu"></app-icon></button>
        <button class="sheet"><app-icon name="lock"></app-icon>Graded Worksheet</button>
        <button aria-label="New sheet"><app-icon name="thinPlus"></app-icon></button>`;
    }
}
customElements.define('sheet-tabs', SheetTabs);

class StatusBar extends BaseElement {

    render() {
        this.shadowDOM.innerHTML = `
        <style>
          :host { display: flex; align-items: center; height: 43px; padding: 0 32px 0 28px; background: #fff; color: #444; font: 22px "Lato", sans-serif; white-space: nowrap; }
          button { display: flex; border: 0; padding: 0; background: none; color: inherit; font: inherit; }
          .stats { margin-left: 39px; }
          .more { margin: 0 80px 0 auto; }
          .zoom { margin: 0 12px 0 18px; }
          .out { margin-left: 78px; }
        </style>
        <button>Calculation Mode: Automatic</button>
        <button class="stats">Workbook Statistics</button>
        <button class="more" aria-label="More"><app-icon name="caret"></app-icon></button>
        <button>Give Feedback to Microsoft</button>
        <button class="out" aria-label="Zoom out"><app-icon name="minus"></app-icon></button>
        <button class="zoom">100%</button>
        <button aria-label="Zoom in"><app-icon name="thinPlus"></app-icon></button>`;
    }
}
customElements.define('status-bar', StatusBar);

class ExcelPage extends BaseElement {

    render() {
        this.shadowDOM.innerHTML = `
        <style>
          :host { display: flex; flex-direction: column; height: 100vh; overflow: hidden; }
          main {
            flex: 1;
            min-height: 0;
            display: flex;
            flex-direction: column;
            margin: 16px 8px 45px 16px;
            border: 4px solid;
            border-color: #9a9a9a #ededed #ededed #9a9a9a;
            overflow: hidden;
          }
        </style>
        <browser-chrome></browser-chrome>
        <main>
          <excel-header></excel-header>
          <excel-ribbon></excel-ribbon>
          <formula-bar></formula-bar>
          <sheet-grid></sheet-grid>
          <sheet-tabs></sheet-tabs>
          <status-bar></status-bar>
        </main>`;
    }
}
customElements.define('excel-page', ExcelPage);
</script>
</body>
</html>
